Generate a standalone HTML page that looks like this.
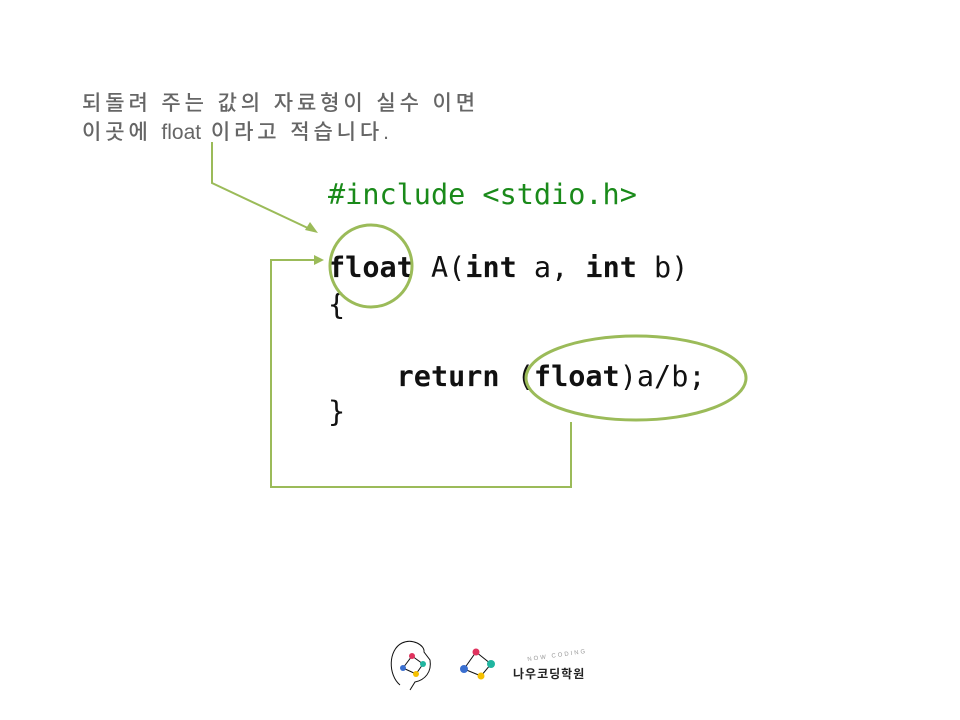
<!DOCTYPE html>
<html><head><meta charset="utf-8"><style>
body{margin:0;width:960px;height:720px;background:#fff;position:relative;overflow:hidden}
.k{position:absolute;left:82px;font-family:"Liberation Sans","Noto Sans CJK KR",sans-serif;font-size:21px;color:#666;letter-spacing:3.9px;white-space:nowrap;font-weight:500}
.c{position:absolute;left:328px;font-family:"DejaVu Sans Mono","Liberation Mono",monospace;font-size:28.5px;color:#111;white-space:pre;line-height:34px}
b{font-weight:bold}
</style></head><body>
<div class="k" style="top:87px">되돌려 주는 값의 자료형이 실수 이면</div>
<div class="k" style="top:116px">이곳에 <span style="letter-spacing:0">float</span> 이라고 적습니다.</div>
<div class="c" style="top:178px;color:#1a8a1a">#include &lt;stdio.h&gt;</div>
<div class="c" style="top:251px"><b>float</b> A(<b>int</b> a, <b>int</b> b)</div>
<div class="c" style="top:288px">{</div>
<div class="c" style="top:360px">    <b>return</b> (<b>float</b>)a/b;</div>
<div class="c" style="top:395px">}</div>
<svg width="960" height="720" style="position:absolute;left:0;top:0">
<g fill="none" stroke="#9bbb59" stroke-width="2">
<polyline points="212,142 212,183 312,230"/>
<circle cx="371" cy="266" r="41" stroke-width="3"/>
<ellipse cx="636" cy="378" rx="110" ry="42" stroke-width="3"/>
<polyline points="571,422 571,487 271,487 271,260 316,260"/>
</g>
<polygon points="318,233 305,230 310,222" fill="#9bbb59"/>
<polygon points="324,260 314,255 314,265" fill="#9bbb59"/>
<g stroke="#111" stroke-width="1" fill="none">
<path d="M400,685 C388,675 388,650 402,643 C412,638 425,645 424,652 L430,660 C432,672 425,680 415,682 L410,690"/>
<polygon points="412,656 423,664 416,674 403,668"/>
<polygon points="476,652 491,664 481,676 464,669"/>
</g>
<g>
<circle cx="412" cy="656" r="3" fill="#e0335e"/><circle cx="423" cy="664" r="3" fill="#20b5a0"/><circle cx="416" cy="674" r="3" fill="#f5c000"/><circle cx="403" cy="668" r="3" fill="#3a6fd0"/>
<circle cx="476" cy="652" r="3.5" fill="#e0335e"/><circle cx="491" cy="664" r="4" fill="#20b5a0"/><circle cx="481" cy="676" r="3.5" fill="#f5c000"/><circle cx="464" cy="669" r="4" fill="#3a6fd0"/>
</g>
<text x="527" y="658" font-family="Liberation Sans" font-size="6" fill="#999" letter-spacing="2" transform="rotate(-8 550 655)">NOW CODING</text>
<text x="513" y="678" font-family="Noto Sans CJK KR,sans-serif" font-size="12" font-weight="bold" fill="#222" letter-spacing="1">나우코딩학원</text>
</svg>
</body></html>
